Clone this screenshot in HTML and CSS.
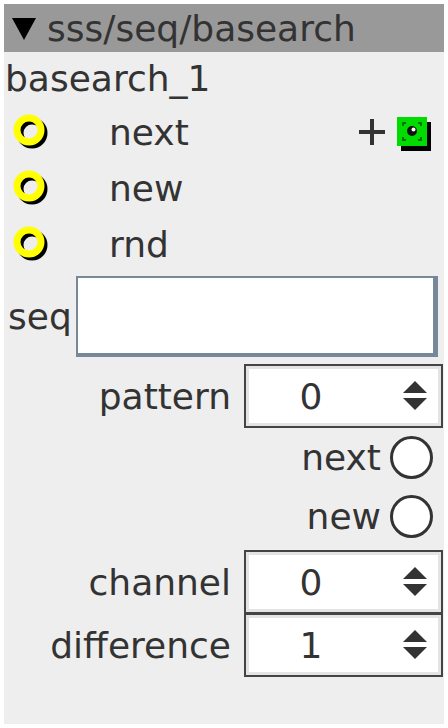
FILE: index.html
```html
<!DOCTYPE html>
<html lang="en">
<head>
  <meta charset="UTF-8">
  <title>sss/seq/basearch</title>
  <link rel="stylesheet" href="styles.css">
</head>
<body>
  <div class="panel">
    <div class="header">
      <svg class="tri" width="24" height="24" viewBox="0 0 24 24"><polygon points="0,2 24,2 12,24" fill="#000"/></svg>
      <span class="title">sss/seq/basearch</span>
    </div>

    <div class="name">basearch_1</div>

    <!-- inlets -->
    <div class="inlet">
      <svg class="ring" width="36" height="36" viewBox="0 0 36 36">
        <circle cx="19" cy="19" r="12" fill="none" stroke="#000" stroke-width="7"/>
        <circle cx="16" cy="16" r="12" fill="none" stroke="#ffff00" stroke-width="7"/>
      </svg>
      <span class="inlet-name">next</span>
      <svg class="plus" width="28" height="28" viewBox="0 0 28 28">
        <path d="M14 1 V27 M1 14 H27" stroke="#333" stroke-width="4"/>
      </svg>
      <svg class="outlet" width="34" height="34" viewBox="0 0 34 34">
        <rect x="4" y="5" width="30" height="29" fill="#000"/>
        <rect x="0" y="0" width="30" height="29" fill="#00dc00"/>
        <circle cx="15" cy="14" r="5" fill="#111"/>
        <circle cx="16.5" cy="12.5" r="2" fill="#fff"/>
        <path d="M6 9 V6 H9 M21 6 H24 V9 M6 20 V23 H9 M21 23 H24 V20" stroke="#0a4d0a" stroke-width="1.5" fill="none"/>
      </svg>
    </div>
    <div class="inlet">
      <svg class="ring" width="36" height="36" viewBox="0 0 36 36">
        <circle cx="19" cy="19" r="12" fill="none" stroke="#000" stroke-width="7"/>
        <circle cx="16" cy="16" r="12" fill="none" stroke="#ffff00" stroke-width="7"/>
      </svg>
      <span class="inlet-name">new</span>
    </div>
    <div class="inlet">
      <svg class="ring" width="36" height="36" viewBox="0 0 36 36">
        <circle cx="19" cy="19" r="12" fill="none" stroke="#000" stroke-width="7"/>
        <circle cx="16" cy="16" r="12" fill="none" stroke="#ffff00" stroke-width="7"/>
      </svg>
      <span class="inlet-name">rnd</span>
    </div>

    <div class="seq-row">
      <span class="seq-label">seq</span>
      <div class="textbox"></div>
    </div>

    <div class="field">
      <span class="label">pattern</span>
      <div class="spin">
        <span class="val">0</span>
        <svg class="arrows" width="24" height="30" viewBox="0 0 24 30"><polygon points="12,0 24,12 0,12" fill="#333"/><polygon points="0,17 24,17 12,29" fill="#333"/></svg>
      </div>
    </div>

    <div class="radio-row first">
      <span class="label">next</span>
      <span class="radio"></span>
    </div>
    <div class="radio-row">
      <span class="label">new</span>
      <span class="radio"></span>
    </div>

    <div class="field">
      <span class="label">channel</span>
      <div class="spin">
        <span class="val">0</span>
        <svg class="arrows" width="24" height="30" viewBox="0 0 24 30"><polygon points="12,0 24,12 0,12" fill="#333"/><polygon points="0,17 24,17 12,29" fill="#333"/></svg>
      </div>
    </div>
    <div class="field stacked">
      <span class="label">difference</span>
      <div class="spin">
        <span class="val">1</span>
        <svg class="arrows" width="24" height="30" viewBox="0 0 24 30"><polygon points="12,0 24,12 0,12" fill="#333"/><polygon points="0,17 24,17 12,29" fill="#333"/></svg>
      </div>
    </div>
  </div>
</body>
</html>
```

FILE: styles.css
```css
body {
  margin: 0;
  background: #fff;
  font-family: 'DejaVu Sans', sans-serif;
  font-size: 36px;
  color: #333;
}
.panel {
  margin: 4px;
  width: 440px;
  height: 720px;
  background: #eee;
}
.header {
  height: 48px;
  background: #999;
  display: flex;
  align-items: center;
  padding-left: 8px;
}
.tri {
  display: block;
}
.title {
  margin-left: 11px;
}
.name {
  height: 52px;
  display: flex;
  align-items: center;
  padding-left: 1px;
}
.inlet {
  height: 56px;
  display: flex;
  align-items: center;
  padding-left: 9px;
  padding-right: 13px;
}
.ring {
  display: block;
}
.inlet-name {
  margin-left: 60px;
}
.plus {
  display: block;
  margin-left: auto;
}
.outlet {
  display: block;
  margin-left: 11px;
  margin-top: 4px;
}
.seq-row {
  height: 88px;
  display: flex;
  align-items: center;
  padding-left: 4px;
}
.seq-label {
  margin-right: 4px;
}
.textbox {
  width: 362px;
  height: 81px;
  box-sizing: border-box;
  background: #fff;
  border-style: solid;
  border-color: #778899;
  border-width: 2px 5px 4px 2px;
}
.field {
  height: 64px;
  margin-top: 4px;
  display: flex;
  align-items: center;
  justify-content: flex-end;
  gap: 13px;
  padding-right: 1px;
}
.field.stacked {
  margin-top: -1px;
}
.spin {
  width: 199px;
  height: 64px;
  box-sizing: border-box;
  border: 2px solid #444;
  display: flex;
  align-items: center;
  background: #fff;
  box-shadow: inset 0 0 0 3px #e4e4e4;
}
.val {
  width: 124px;
  margin-left: 3px;
  text-align: center;
}
.arrows {
  display: block;
  margin-left: auto;
  margin-right: 14px;
}
.radio-row {
  height: 60px;
  display: flex;
  align-items: center;
  justify-content: flex-end;
  gap: 9px;
  padding-right: 11px;
}
.radio-row.first {
  height: 58px;
}
.radio {
  width: 43px;
  height: 43px;
  box-sizing: border-box;
  border: 3px solid #333;
  border-radius: 50%;
  background: #fff;
}
```
